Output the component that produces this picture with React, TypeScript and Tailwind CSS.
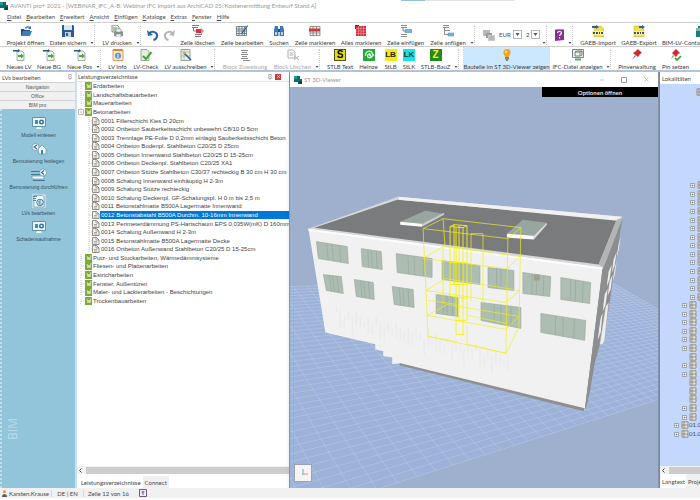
import { Minus, Pin, X } from "lucide-react";
import type { ReactNode } from "react";

type IconType = () => ReactNode;

type ToolItem = {
  label: string;
  icon: IconType;
  width: string;
  disabled?: boolean;
  active?: boolean;
};

const svgProps = { viewBox: "0 0 12 12", className: "size-3 shrink-0", "aria-hidden": true };

function OpenProjectIcon() {
  return (
    <svg {...svgProps}>
      <path d="M1 4h3l1 1h5v6H1z" fill="#1f4e86" />
      <path d="M3 6h9l-2 5H1z" fill="#3f7cc0" />
      <path d="M5 3c1-2 4-2 5-1l1-1v3H8l1-1c-1-1-2 0-3 1z" fill="#3d6fae" />
    </svg>
  );
}

function SaveIcon() {
  return (
    <svg {...svgProps}>
      <path d="M0 0h11l1 1v11H0z" fill="#2b5b94" />
      <path d="M2 0h8v5H2z" fill="#dbe7f4" />
      <path d="M3 7h6v5H3z" fill="#c3d3e6" />
      <path d="M4 8h2v3H4z" fill="#2b5b94" />
    </svg>
  );
}

function PrintIcon() {
  return (
    <svg {...svgProps}>
      <path d="M1 0h5l2 2v5H1z" fill="#eef4ea" stroke="#5d7f5a" strokeWidth=".8" />
      <path d="M2 3h4M2 5h3" stroke="#6a9a5c" />
      <path d="M4 6h7l1 1v4H3V7z" fill="#8c9599" />
      <path d="M5 4h5v3H5zM5 9h5v3H5z" fill="#f7f9f9" stroke="#6d777c" strokeWidth=".5" />
      <circle cx="10" cy="8" r=".9" fill="#5cb531" />
    </svg>
  );
}

function UndoIcon() {
  return (
    <svg {...svgProps}>
      <path d="M2 4.500c3-3.500 9-1 8 3-.3 1.500-1.500 3-3.500 3.500" fill="none" stroke="#2f62a8" strokeWidth="2" />
      <path d="M0 1l1 6 5-1z" fill="#2f62a8" />
    </svg>
  );
}

function RedoIcon() {
  return (
    <svg {...svgProps}>
      <path d="M10 4.500c-3-3.500-9-1-8 3 .3 1.500 1.500 3 3.500 3.500" fill="none" stroke="#b4b7ba" strokeWidth="2" />
      <path d="M12 1l-1 6-5-1z" fill="#b4b7ba" />
    </svg>
  );
}

function DeleteRowIcon() {
  return (
    <svg {...svgProps}>
      <path d="M0 .5h7M0 2.500h6M3 9.500h7M3 11.500h6" stroke="#7d7d7d" />
      <path d="M1.500 3v3H4" stroke="#7d7d7d" fill="none" />
      <path d="M4 4h5v4H4z" fill="#d6323b" />
      <path d="M9 3l3 3-3 3z" fill="#e58288" />
    </svg>
  );
}

function EditRowIcon() {
  return (
    <svg {...svgProps}>
      <path d="M.5 1.500h10v9H.5zM.5 4h10M.5 6h10M.5 8.500h10M3 1.500v9M6 1.500v9M8.500 1.500v9" fill="#f4f4f4" stroke="#5e6a70" strokeWidth=".8" />
      <path d="M11.500 0L6 7l-1 2 2-1 5-7z" fill="#35639c" />
    </svg>
  );
}

function SearchIcon() {
  return (
    <svg {...svgProps}>
      <path d="M2 1h3l.5 10H1V5zM7 1h3l1 4v6H6.500z" fill="#3f77b5" />
      <path d="M5 4h2v3H5z" fill="#21508b" />
      <path d="M2 7h2v3H2zM8 7h2v3H8z" fill="#b8d1eb" />
    </svg>
  );
}

function MarkRowIcon() {
  return (
    <svg {...svgProps}>
      <path d="M1 1.500h10v9H1zM1 8h10M4 1.500v9M7.500 1.500v9" fill="#f4f4f4" stroke="#787878" strokeWidth=".8" />
      <path d="M0 3.500h11v3H0z" fill="#cc3a37" />
    </svg>
  );
}

function MarkAllIcon() {
  return (
    <svg {...svgProps}>
      <path d="M1 1h10v10H1z" fill="#d12f3c" />
      <path d="M1 3.500h10M1 6h10M1 8.500h10M3.500 1v10M6 1v10M8.500 1v10" stroke="#ee9aa0" strokeWidth=".6" />
      <path d="M0 0h4v1H1v3H0z" fill="#8a2028" />
    </svg>
  );
}

function InsertRowIcon() {
  return (
    <svg {...svgProps}>
      <path d="M1 .5h6M1 2.500h6M1 9.500h6M1 11.500h6M3 3v3h2" fill="none" stroke="#8b8b8b" />
      <path d="M5 4.500h7v3H5z" fill="#79b2dc" stroke="#4b86b4" strokeWidth=".5" />
    </svg>
  );
}

function AppendRowIcon() {
  return (
    <svg {...svgProps}>
      <path d="M1 .5h6M1 2.500h6M3 5.500h5M2.500 3v6.500H6" fill="none" stroke="#8b8b8b" />
      <path d="M6 8h6v3H6z" fill="#79b2dc" stroke="#4b86b4" strokeWidth=".5" />
    </svg>
  );
}

function CurrencyIcon() {
  return (
    <svg {...svgProps}>
      <path d="M0 1h7v6H0z" fill="#b9b9b9" />
      <path d="M3 4h6v5H3z" fill="#9a9a9a" />
      <path d="M5 6h7v6H5z" fill="#c9c9c9" />
      <path d="M6 8h5M6 10h5" stroke="#8f8f8f" strokeWidth=".6" />
    </svg>
  );
}

function HelpIcon() {
  return (
    <svg {...svgProps}>
      <path d="M2 1l9-1v11l-9 1z" fill="#8e2f9c" />
      <path d="M2 1l1-1h8v1z" fill="#c47fd0" />
      <path d="M4.500 4c0-2 4-2 4 0 0 1.300-2 1.200-2 3M6.500 8.300v1.200" fill="none" stroke="#fff" strokeWidth="1.200" />
    </svg>
  );
}

function GaebImportIcon() {
  return (
    <svg {...svgProps}>
      <path d="M2 1h7l3 3v8H2z" fill="#f2dd52" stroke="#a99c3d" strokeWidth=".4" />
      <path d="M0 1h4V0l3 2-3 2V3H0z" fill="#2d5f9f" />
      <path d="M0 6h12v4H0z" fill="#f8efab" />
      <path d="M1 8h2M4 8h2M7 8h1M9 8h2" stroke="#3f5164" strokeWidth="2" />
    </svg>
  );
}

function GaebExportIcon() {
  return (
    <svg {...svgProps}>
      <path d="M1 1h7l3 3v8H1z" fill="#f2dd52" stroke="#a99c3d" strokeWidth=".4" />
      <path d="M6 1h3V0l3 2-3 2V3H6z" fill="#2d5f9f" />
      <path d="M0 6h12v4H0z" fill="#f8efab" />
      <path d="M1 8h2M4 8h2M7 8h1M9 8h2" stroke="#3f5164" strokeWidth="2" />
    </svg>
  );
}

function ContainerIcon() {
  return (
    <svg {...svgProps}>
      <path d="M2 1h8v11H0V6h2z" fill="#1e7d78" />
      <path d="M0 3h5v3H0z" fill="#7eb7ae" />
    </svg>
  );
}

function NewDocIcon() {
  return (
    <svg {...svgProps}>
      <path d="M4 2h5l2 2v7.500H4z" fill="#f2f6ef" stroke="#7f8c84" strokeWidth=".7" />
      <path d="M0 1h5V0l2 1.700L5 3.500v-1H0z" fill="#24568f" />
      <path d="M5 6h3V4.500l3 2.500-3 2.500V8H5z" fill="#4ba83e" />
    </svg>
  );
}

function InfoIcon() {
  return (
    <svg {...svgProps}>
      <path d="M1 .5h10v11H1z" fill="#f5e6cc" stroke="#d28b3d" strokeWidth=".8" />
      <path d="M1 0h10v2H1z" fill="#e08a36" />
      <circle cx="6" cy="6.800" r="3" fill="#5e91c8" />
      <path d="M6 5v4" stroke="#fff" />
    </svg>
  );
}

function CheckIcon() {
  return (
    <svg {...svgProps}>
      <path d="M1 .5h6l2 2v9H1z" fill="#e4efdf" stroke="#7b9c76" strokeWidth=".8" />
      <path d="M3 7l3 3 5.500-7" fill="none" stroke="#43a436" strokeWidth="2" />
    </svg>
  );
}

function TenderIcon() {
  return (
    <svg {...svgProps}>
      <path d="M1 .5h9v11H1z" fill="#ecf3df" stroke="#7d8a7b" strokeWidth=".8" />
      <path d="M1 3h9M4 .5v11M1 7h9" stroke="#8aa77e" strokeWidth=".6" />
      <path d="M4 4l7 7" stroke="#2f5ea0" strokeWidth="1.600" />
      <path d="M3 3h3v2H4z" fill="#d9a43c" />
    </svg>
  );
}

function BlockAssignIcon() {
  return (
    <svg {...svgProps}>
      <path d="M2 1.500h7M3 3.500h5M2 5.500h7M3 7.500h5M2 9.500h7M4 11.500h7" fill="none" stroke="#8d8d8d" />
    </svg>
  );
}

function BlockDeleteIcon() {
  return (
    <svg {...svgProps}>
      <path d="M1 1h5l2 2v6H1zM2.500 4h4M2.500 6h4M7 7l5 4M12 7l-5 4" fill="none" stroke="#b0b0b0" />
    </svg>
  );
}

function StlbTextIcon() {
  return <span className="flex size-3 shrink-0 items-center justify-center bg-[#e8df1b] font-['Liberation_Sans'] text-[10px] leading-none font-bold text-black outline-1 -outline-offset-1 outline-[#55530d]">S</span>;
}

function HeinzeIcon() {
  return (
    <svg {...svgProps}>
      <path d="M0 0h12v12H0z" fill="#27a83a" />
      <path d="M2.500 7c0-6 6-6 7-2l1 1-2 2-2-2h1c-1-2-3-1-3 1 0 2 3 2 4 1" fill="none" stroke="#e9ffe9" strokeWidth="1.200" />
    </svg>
  );
}

function StlbIcon() {
  return <span className="flex size-3 shrink-0 items-center justify-center bg-[#f4ea14] font-['Liberation_Sans'] text-[8px] leading-none font-bold text-[#27270f]">LB</span>;
}

function StlkIcon() {
  return <span className="flex size-3 shrink-0 items-center justify-center bg-[#19e3e8] font-['Liberation_Sans'] text-[8px] leading-none font-bold text-[#0d3e40]">LK</span>;
}

function BauzIcon() {
  return <span className="flex size-3 shrink-0 items-center justify-center bg-[#238a1c] font-['Liberation_Sans'] text-[10px] leading-none font-bold text-[#f6f02c]">Z</span>;
}

function BulbIcon() {
  return (
    <svg {...svgProps}>
      <path d="M6 0a3.600 3.600 0 0 1 3.600 3.700C9.500 6 8 6 8 8H4c0-2-1.500-2-1.600-4.300A3.600 3.600 0 0 1 6 0z" fill="#f5a21f" />
      <circle cx="5" cy="3" r="1.300" fill="#fbd57e" />
      <path d="M4 8h4v2.500H7V12H5v-1.500H4z" fill="#8a8274" />
    </svg>
  );
}

function IfcIcon() {
  return (
    <svg {...svgProps}>
      <path d="M.5.500h11v8H.5z" fill="#eef2f2" stroke="#77868a" />
      <path d="M3 3h5v4H3zM3 3l2-1h5v4L8 7M8 3l2-1" fill="none" stroke="#586d6f" strokeWidth=".8" />
      <path d="M3 10.500h6" stroke="#5bb163" strokeWidth="2" />
    </svg>
  );
}

function PinManageIcon() {
  return (
    <svg {...svgProps}>
      <path d="M7 0l4 4-2 1-2 3-5-4 3-2z" fill="#cf2a31" />
      <path d="M4 6l-3 5 4-4z" fill="#7d7d7d" />
    </svg>
  );
}

function PinSetIcon() {
  return (
    <svg {...svgProps}>
      <path d="M6 0l4 4-2 1-2 3-4-4 2-2z" fill="#cf2a31" />
      <path d="M3 6l-2 4 3-3z" fill="#7d7d7d" />
      <path d="M5 9l2 2 4-4" fill="none" stroke="#3c9b35" strokeWidth="1.700" />
    </svg>
  );
}

const MENU = ["Datei", "Bearbeiten", "Erweitert", "Ansicht", "Einfügen", "Kataloge", "Extras", "Fenster", "Hilfe"];

const PROJECT_TOOLS: ToolItem[] = [
  { label: "Projekt öffnen", icon: OpenProjectIcon, width: "w-[43px]" },
  { label: "Daten sichern", icon: SaveIcon, width: "w-[42px]" },
];

const PRINT_TOOLS: ToolItem[] = [{ label: "LV drucken", icon: PrintIcon, width: "w-[36px]" }];

const ROW_TOOLS: ToolItem[] = [
  { label: "Zeile löschen", icon: DeleteRowIcon, width: "w-[41px]" },
  { label: "Zeile bearbeiten", icon: EditRowIcon, width: "w-[48px]" },
  { label: "Suchen", icon: SearchIcon, width: "w-[26px]" },
  { label: "Zeile markieren", icon: MarkRowIcon, width: "w-[46px]" },
  { label: "Alles markieren", icon: MarkAllIcon, width: "w-[46px]" },
  { label: "Zeile einfügen", icon: InsertRowIcon, width: "w-[43px]" },
  { label: "Zeile anfügen", icon: AppendRowIcon, width: "w-[42px]" },
];

const GAEB_TOOLS: ToolItem[] = [
  { label: "GAEB-Import", icon: GaebImportIcon, width: "w-[42px]" },
  { label: "GAEB-Export", icon: GaebExportIcon, width: "w-[40px]" },
  { label: "BIM-LV-Container importieren", icon: ContainerIcon, width: "w-[86px]" },
];

const NEW_TOOLS: ToolItem[] = [
  { label: "Neues LV", icon: NewDocIcon, width: "w-[30px]" },
  { label: "Neue BG", icon: NewDocIcon, width: "w-[30px]" },
  { label: "Neue Pos", icon: NewDocIcon, width: "w-[31px]" },
];

const LV_TOOLS: ToolItem[] = [
  { label: "LV Info", icon: InfoIcon, width: "w-[25px]" },
  { label: "LV-Check", icon: CheckIcon, width: "w-[32px]" },
  { label: "LV ausschreiben", icon: TenderIcon, width: "w-[47px]" },
];

const BLOCK_TOOLS: ToolItem[] = [
  { label: "Block Zuweisung", icon: BlockAssignIcon, width: "w-[52px]", disabled: true },
  { label: "Block Löschen", icon: BlockDeleteIcon, width: "w-[43px]", disabled: true },
];

const CATALOG_TOOLS: ToolItem[] = [
  { label: "STLB Text", icon: StlbTextIcon, width: "w-[32px]" },
  { label: "Heinze", icon: HeinzeIcon, width: "w-[25px]" },
  { label: "StLB", icon: StlbIcon, width: "w-[19px]" },
  { label: "StLK", icon: StlkIcon, width: "w-[18px]" },
  { label: "STLB-BauZ", icon: BauzIcon, width: "w-[35px]" },
];

const VIEWER_TOOLS: ToolItem[] = [
  { label: "Bauteile im ST 3D-Viewer zeigen", icon: BulbIcon, width: "w-[87px]", active: true },
  { label: "IFC-Datei anzeigen", icon: IfcIcon, width: "w-[55px]" },
];

const PIN_TOOLS: ToolItem[] = [
  { label: "Pinverwaltung", icon: PinManageIcon, width: "w-[44px]" },
  { label: "Pin setzen", icon: PinSetIcon, width: "w-[33px]" },
];

const POSITIONS = [
  "Fillerschicht Kies D 20cm",
  "Ortbeton Sauberkeitsschicht unbewehrt C8/10 D 5cm",
  "Trennlage PE-Folie D 0,2mm einlagig Sauberkeitsschicht Beton",
  "Ortbeton Bodenpl. Stahlbeton C20/25 D 25cm",
  "Ortbeton Innenwand Stahlbeton C20/25 D 15-25cm",
  "Ortbeton Deckenpl. Stahlbeton C20/25 XA1",
  "Ortbeton Stütze Stahlbeton C30/37 rechteckig B 30 cm H 30 cm",
  "Schalung Innenwand einhäuptig H 2-3m",
  "Schalung Stütze rechteckig",
  "Schalung Deckenpl. GF-Schalungspl. H 0 m bis 2,5 m",
  "Betonstahlmatte B500A Lagermatte Innenwand",
  "Betonstabstahl B500A Durchm. 10-16mm Innenwand",
  "Perimeterdämmung PS-Hartschaum EPS 0,035W(mK) D 160mm",
  "Schalung Außenwand H 2-3m",
  "Betonstahlmatte B500A Lagermatte Decke",
  "Ortbeton Außenwand Stahlbeton C20/25 D 15-25cm",
];

const GROUPS_BEFORE = ["Erdarbeiten", "Landschaftsbauarbeiten", "Mauerarbeiten", "Betonarbeiten"];
const GROUPS_AFTER = [
  "Putz- und Stuckarbeiten, Wärmedämmsysteme",
  "Fliesen- und Plattenarbeiten",
  "Estricharbeiten",
  "Fenster, Außentüren",
  "Maler- und Lackierarbeiten - Beschichtungen",
  "Trockenbauarbeiten",
];

const SELECTED = 11;

function ToolGroup({ items, menu }: { items: ToolItem[]; menu?: boolean }) {
  return (
    <>
      {items.map(({ label, icon: Icon, width, disabled, active }) => (
        <button
          key={label}
          disabled={disabled}
          className={`flex h-full shrink-0 flex-col items-center gap-0.5 pt-0.5 whitespace-nowrap ${width} ${
            active ? "bg-[#cce8ff]" : ""
          } ${disabled ? "text-[#a9a9a9]" : "text-[#3c3c3c]"}`}
        >
          <Icon />
          <span className="leading-[7px]">{label}</span>
        </button>
      ))}
      {menu && <Overflow />}
    </>
  );
}

function Overflow() {
  return (
    <button aria-label="Weitere Optionen" className="flex h-full w-1.5 shrink-0 items-end justify-center pb-0.5">
      <svg viewBox="0 0 4 2" className="h-0.5 w-1">
        <path d="M.5 0h3L2 2z" fill="#555" />
      </svg>
    </button>
  );
}

function Separator() {
  return <div className="mr-1 -ml-px h-5 shrink-0 self-center border-l border-dotted border-[#c9c9c9]" />;
}

function DropDown({ label, value, width }: { label: string; value: string; width: string }) {
  return (
    <label className={`grid shrink-0 items-center ${width}`}>
      <select aria-label={label} defaultValue={value} className="col-start-1 row-start-1 w-full appearance-none leading-[9px] outline-none">
        <option>{value}</option>
      </select>
      <span className="pointer-events-none col-start-1 row-start-1 flex size-[9px] items-center justify-center justify-self-end border border-[#b5b5b5] bg-white">
        <svg viewBox="0 0 5 3" className="h-[3px] w-[5px]">
          <path d="M.5 0h4l-2 3z" fill="#555" />
        </svg>
      </span>
    </label>
  );
}

function AppLogo() {
  return (
    <svg viewBox="0 0 8 8" className="size-2 shrink-0">
      <path d="M0 0h6v3h2v5H4V6H0z" fill="#0f6b68" />
      <path d="M0 0h3v3H0z" fill="#1d9a8f" />
      <path d="M5 5h3v3H5z" fill="#153f41" />
    </svg>
  );
}

const SIDE_ITEMS = [
  { label: "Modell einlesen", kind: "screen" },
  { label: "Bemusterung festlegen", kind: "house" },
  { label: "Bemusterung durchführen", kind: "lines" },
  { label: "LVs bearbeiten", kind: "document" },
  { label: "Schadensaufnahme", kind: "screen" },
];

function SideIcon({ kind }: { kind: string }) {
  return (
    <svg viewBox="0 0 16 16" className="size-4">
      {kind === "screen" && (
        <>
          <path d="M1.500 2.500h13v9h-13z" fill="#e9f6fb" stroke="#5f91a8" />
          <path d="M6 12h4l1 2H5z" fill="#e9f6fb" />
          <path d="M4 5h3v4H4z" fill="#4c8cb4" />
          <circle cx="10.500" cy="7" r="2.500" fill="#2f6e9c" />
          <circle cx="10.500" cy="7" r="1" fill="#fff" />
        </>
      )}
      {kind === "house" && (
        <>
          <path d="M7 8l4-4 4 4v5H8z" fill="#f2fafd" stroke="#5585a0" strokeWidth=".6" />
          <path d="M10 9h2v4h-2z" fill="#4580a5" />
          <circle cx="4.500" cy="6" r="3.500" fill="#f2fafd" stroke="#5585a0" strokeWidth=".6" />
          <path d="M6 4L3 6l3 2" fill="none" stroke="#2f6e9c" strokeWidth="1.200" />
        </>
      )}
      {kind === "lines" && (
        <>
          <path d="M0 4.500h9M0 7.500h11M2 13.500h12" stroke="#3f7798" strokeWidth="1" />
          <path d="M1 9h12v3H1z" fill="#f2fafd" stroke="#4f7f9a" strokeWidth=".6" />
          <circle cx="12" cy="5.500" r="3.500" fill="#f2fafd" stroke="#4f7f9a" strokeWidth=".6" />
          <path d="M13 3.500l-2.500 2 2.500 2" fill="none" stroke="#2f6e9c" strokeWidth="1.200" />
        </>
      )}
      {kind === "document" && (
        <>
          <path d="M0 0h16v16H0z" fill="#b9dbe8" stroke="#83a9ba" />
          <path d="M3 2.500h8l2 2V14H3z" fill="#f4fbfd" stroke="#5c8ba2" strokeWidth=".6" />
          <path d="M2 3.500h4M2 5.500h3M2 7.500h3" stroke="#4e86a5" />
          <circle cx="9" cy="9.500" r="3.300" fill="#d3e9f1" stroke="#3e7d9e" />
          <path d="M8 8v3h3M9 7v3" fill="none" stroke="#3e7d9e" strokeWidth=".8" />
        </>
      )}
    </svg>
  );
}

function SidePanel() {
  return (
    <aside className="flex w-[77px] shrink-0 flex-col border-r-2 border-[#c6e3f5] bg-[#92c4da]">
      <header className="flex h-2.5 items-center justify-between bg-white px-0.5">
        <h2>LVs bearbeiten</h2>
        <Pin size={6} className="text-[#777]" />
      </header>
      <nav className="flex flex-col font-['Liberation_Sans',sans-serif] text-[5px] text-[#555]">
        {["Navigation", "Office", "BIM pro"].map((name) => (
          <button key={name} className="h-[9px] border-t border-[#d0d0d0] bg-[#f1f1f1] leading-[8px]">
            {name}
          </button>
        ))}
      </nav>
      <div className="flex flex-1 flex-col justify-between border-l-2 border-dotted border-[#bfdfeb] pt-1.5 pb-12">
        <div className="flex flex-col gap-0.5">
          {SIDE_ITEMS.map((item) => (
            <button key={item.label} className="flex flex-col items-center font-['Liberation_Sans',sans-serif] text-[5px] leading-[8px] whitespace-nowrap text-[#31505e]">
              <SideIcon kind={item.kind} />
              {item.label}
            </button>
          ))}
        </div>
        <span className="ml-1 rotate-180 self-start font-['Open_Sans',sans-serif] text-[12px] leading-[14px] text-[#bcdde9] [writing-mode:vertical-rl]">BIM</span>
      </div>
    </aside>
  );
}

function GroupRow({ name, open }: { name: string; open?: boolean }) {
  return (
    <li className="flex items-center">
      <svg viewBox="0 0 14 8" className="h-2 w-3.5 shrink-0">
        <path d="M3 0v8M3 4h4" stroke="#c8c8c8" strokeDasharray="1 1" />
        {open && <path d="M.5 1.500h5v5h-5zM2 4h2" fill="#fff" stroke="#9a9a9a" strokeWidth=".7" />}
        <path d="M7 0h7v8H7z" fill="#7fa935" />
        <path d="M9 2l1 4 1-3 1 3 1-5" fill="none" stroke="#e6f1cf" strokeWidth=".8" />
      </svg>
      <span className="pl-px">{name}</span>
    </li>
  );
}

function PositionRow({ index, name }: { index: number; name: string }) {
  const selected = index === SELECTED;
  return (
    <li className="flex items-center pl-2.5">
      <svg viewBox="0 0 12 8" className="h-2 w-3 shrink-0">
        <path d="M1 0v8M1 4h3" stroke="#c8c8c8" strokeDasharray="1 1" />
        <path d="M4.500.500h4L11 3v4.500H4.500z" fill="#f3f1ee" stroke="#77716b" strokeWidth=".8" />
        <path d="M8 .5V3h3M6 4.500h3M6 6h3" fill="none" stroke="#77716b" strokeWidth=".6" />
      </svg>
      <span className={`mr-px flex h-full flex-1 items-center gap-0.5 pl-px ${selected ? "bg-[#0078d7] text-white" : ""}`}>
        <span>{String(index + 1).padStart(4, "0")}</span>
        <span>{name}</span>
      </span>
    </li>
  );
}

function HScroll() {
  return (
    <div className="flex h-2 shrink-0 items-center gap-1 bg-[#f2f2f2] pl-0.5">
      <svg viewBox="0 0 3 5" className="h-[5px] w-[3px]">
        <path d="M2.500.500l-2 2 2 2" fill="none" stroke="#444" />
      </svg>
      <div className="h-[7px] flex-1 bg-[#cdcdcd]" />
    </div>
  );
}

function ListPanel() {
  return (
    <section className="flex w-[212px] shrink-0 flex-col overflow-hidden bg-white">
      <header className="flex h-2.5 shrink-0 items-center justify-between border-b border-[#e5e5e5] pr-2 pl-px">
        <h2>Leistungsverzeichnisse</h2>
        <span className="flex items-center gap-0.5">
          <Pin size={6} className="text-[#666]" />
          <button aria-label="Schließen" className="flex size-1.5 items-center justify-center bg-[#d63636] text-white">
            <X size={5} strokeWidth={3} />
          </button>
        </span>
      </header>
      <ul className="grid h-[223px] shrink-0 grid-rows-[repeat(26,minmax(0,1fr))] pl-px font-['Liberation_Sans',sans-serif] text-[6px] leading-[8px] whitespace-nowrap text-[#3f3f3f]">
        {GROUPS_BEFORE.map((name) => (
          <GroupRow key={name} name={name} open={name === "Betonarbeiten"} />
        ))}
        {POSITIONS.map((name, i) => (
          <PositionRow key={name} index={i} name={name} />
        ))}
        {GROUPS_AFTER.map((name) => (
          <GroupRow key={name} name={name} />
        ))}
      </ul>
      <div className="flex-1" />
      <HScroll />
      <div className="flex h-3.5 shrink-0 items-stretch pt-0.5 pl-0.5">
        <button className="px-0.5 text-[#444]">Leistungsverzeichnisse</button>
        <button className="bg-[#f0f0f0] px-0.5">Connect</button>
      </div>
    </section>
  );
}

type Pt = [number, number];

// Ground plane corners: far left, far right, near right, near left
const GROUND: Pt[] = [[180, 290], [600, 275], [760, 367], [280, 520]];

// Projective map of the unit square onto the ground plane
function project(u: number, v: number): Pt {
  const [a, b, c, d] = GROUND;
  const dx1 = b[0] - c[0];
  const dx2 = d[0] - c[0];
  const sx = a[0] - b[0] + c[0] - d[0];
  const dy1 = b[1] - c[1];
  const dy2 = d[1] - c[1];
  const sy = a[1] - b[1] + c[1] - d[1];
  const det = dx1 * dy2 - dx2 * dy1;
  const g = (sx * dy2 - dx2 * sy) / det;
  const h = (dx1 * sy - sx * dy1) / det;
  const w = g * u + h * v + 1;
  return [
    ((b[0] - a[0] + g * b[0]) * u + (d[0] - a[0] + h * d[0]) * v + a[0]) / w,
    ((b[1] - a[1] + g * b[1]) * u + (d[1] - a[1] + h * d[1]) * v + a[1]) / w,
  ];
}

const GRID_COUNT = 42;
const GRID_PATH = Array.from({ length: GRID_COUNT + 1 }, (_, i) => {
  const t = i / GRID_COUNT;
  return `M${project(t, 0)}L${project(t, 1)}M${project(0, t)}L${project(1, t)}`;
}).join("");

const WINDOWS: Pt[][] = [
  [[316, 241], [347, 246], [348, 263], [318, 258]],
  [[361, 248], [381, 251], [382, 269], [362, 266]],
  [[396, 253], [432, 258], [432, 277], [397, 272]],
  [[442, 260], [480, 265], [480, 284], [442, 279]],
  [[488, 267], [514, 270], [514, 290], [488, 287]],
  [[523, 272], [551, 276], [550, 296], [523, 293]],
  [[561, 277], [591, 282], [590, 303], [561, 299]],
  [[323, 274], [341, 276], [343, 293], [326, 290]],
  [[354, 279], [373, 282], [374, 299], [356, 296]],
  [[392, 286], [413, 289], [414, 307], [394, 304]],
  [[436, 294], [458, 297], [458, 316], [436, 313]],
  [[481, 302], [521, 307], [521, 328], [481, 320]],
  [[541, 313], [586, 320], [585, 340], [541, 332]],
];

function mullions(w: Pt[]) {
  return [0.33, 0.5, 0.75]
    .map((t) => {
      const x1 = w[0][0] + (w[1][0] - w[0][0]) * t;
      const y1 = w[0][1] + (w[1][1] - w[0][1]) * t;
      const x2 = w[3][0] + (w[2][0] - w[3][0]) * t;
      const y2 = w[3][1] + (w[2][1] - w[3][1]) * t;
      return `M${x1} ${y1}L${x2} ${y2}`;
    })
    .join("");
}

// Faint joints along the plinth
const PLINTH = Array.from({ length: 44 }, (_, i) => {
  const x = 336 + i * 4;
  const y = 306 + i * 1.1 + ((i * 7) % 5) * 2;
  return `M${x} ${y}v${6 + ((i * 5) % 7) * 2}`;
}).join("");

function Building() {
  return (
    <svg viewBox="289 86 370 402" preserveAspectRatio="xMidYMid slice" className="h-full w-full" role="img" aria-label="Gebäudemodell">
      <polygon points={GROUND.join(" ")} fill="#9db2d8" />
      <path d={GRID_PATH} fill="none" stroke="#c6d5f0" strokeWidth=".6" opacity=".6" />
      <path d="M603 267L623 216L616 262L609 308L604 340L600 345L595 363L590 392L585 410L583 350z" fill="#8b8d8f" />
      <path d="M609 271l3-7-2 15-3 7zM614 259l3-8-2 14-3 8zM619 244l2-8-2 14-2 7zM605 294l3-6-2 16-3 7zM610 281l3-7-2 15-3 6zM615 268l2-7-2 14-2 6zM600 320l3-8-2 20-3 8z" fill="#eceeee" />
      <path d="M606 306l3-4-4 38q-2 6-5 4z" fill="#eeeeee" stroke="#a5a5a5" strokeWidth=".5" />
      <path d="M308 228L398 196L623 216L603 267z" fill="#d7d8d9" />
      <path d="M314 227L397 199L617 219L599 264z" fill="#7a7b7c" />
      <path d="M398 196L622 216L618 220L399 199z" fill="#f1f1f1" />
      <path d="M617 219L623 217L604 267L599 264z" fill="#b3b4b5" />
      <path d="M400 221L425 210L444 213L422 223z" fill="#98a69f" />
      <path d="M400 221L422 223V226L400 224z" fill="#fbfbfb" />
      <path d="M422 223L444 212V214L422 226z" fill="#c7cbc9" />
      <path d="M507 233L523 219L547 222L534 235z" fill="#98a69f" />
      <path d="M507 233L534 235V239L507 237z" fill="#fbfbfb" />
      <path d="M534 235L547 222V224L534 239z" fill="#dcdedd" />
      <path d="M308 228L603 267L585 410L400 363L392 364V357L383 356V351L375 349V344L325 332z" fill="#f1f1f2" />
      <path d="M308 228L603 267V269L308 230z" fill="#fdfdfd" />
      <path d="M400 363L585 408L584 411L399 365z" fill="#8f8f90" />
      <path d="M603 267L585 410L588 402L606 285z" fill="#8c8e90" />
      <path d={PLINTH} stroke="#e3e3e4" strokeWidth=".6" />
      {WINDOWS.map((w, i) => (
        <g key={i}>
          <polygon points={w.join(" ")} fill="#adbdb1" stroke="#98a69c" strokeWidth=".6" />
          <path d={mullions(w)} stroke="#95a59a" strokeWidth=".6" />
        </g>
      ))}
      <path d="M534 274h6v6h-6z" fill="#a0a08f" />
      <g fill="none" stroke="#f0ef1d" strokeWidth=".7">
        <path d="M423 228L443 218L521 227L508 238zM423 228L428 336L506 353L519 327L521 227M443 218L445 246M508 238L506 353" />
        <path d="M423 258L443 246L520 256L507 268zM426 290L445 278L520 290L506 302zM427 315L447 304L519 316L506 329z" />
        <path d="M443 246V304M471 233h12v70M471 233v68M429 300l28 4M468 315l38 8" />
        <path d="M428 336l27 5M467 325v18M506 353l-38-9" strokeWidth=".6" />
      </g>
      <g fill="none" stroke="#f4f314" strokeWidth=".9">
        <path d="M450 226l4-2 13 1-4 2zM450 226v70M454 224v60M459 225v95M463 227v108M467 225v95M456 227v107" />
        <path d="M450 262h17M450 284h17M452 296l15 2M455 320h11M456 334h8" />
      </g>
    </svg>
  );
}

function Viewer() {
  return (
    <section className="flex min-w-0 flex-1 flex-col border-r border-l border-[#8793a8] bg-[#9fb0cf] shadow-md">
      <header className="flex h-[15px] shrink-0 items-center bg-white pr-2 pl-1 text-[#9a9a9a]">
        <AppLogo />
        <h2 className="flex-1 pl-0.5">ST 3D-Viewer</h2>
        <div className="flex items-center gap-4">
          <button aria-label="Minimieren">
            <Minus size={6} />
          </button>
          <button aria-label="Maximieren">
            <svg viewBox="0 0 6 6" className="size-1.5">
              <path d="M.5.500h5v5h-5z" fill="none" stroke="#9a9a9a" />
            </svg>
          </button>
          <button aria-label="Schließen">
            <X size={7} />
          </button>
        </div>
      </header>
      <div className="relative min-h-0 flex-1">
        <Building />
        <button className="absolute top-0 right-0 h-[10px] w-[116px] bg-black text-center leading-[9px] font-bold text-[#e6e6e6]">Optionen öffnen</button>
        <div className="absolute bottom-1.5 left-1 size-[18px] border border-[#9ca3ad] bg-[#f5f5f5]">
          <svg viewBox="0 0 16 16" className="size-4">
            <path d="M8 4v5" stroke="#6fa3ea" />
            <path d="M8 9h5" stroke="#e98d83" />
            <path d="M8 9l-1 1" stroke="#76c47b" />
          </svg>
        </div>
      </div>
    </section>
  );
}

const LEAFS = [20, 23, 24, 25];

const LOCATIONS = Array.from({ length: 30 }, (_, i) => {
  if (i < 14) return { indent: "pl-[30px]", leaf: false, label: "" };
  if (i < 28) return { indent: "pl-[22px]", leaf: LEAFS.includes(i), label: "" };
  return { indent: "pl-[14px]", leaf: false, label: "01.0" };
});

function LocationIcon() {
  return <path d="M8 .8h6v6.400H8zM8 4h6M10 .8v6.400" fill="#e4e0d6" stroke="#7b7568" strokeWidth=".7" />;
}

function LocationPanel() {
  return (
    <aside className="flex w-[41px] shrink-0 flex-col overflow-hidden border-l border-[#7d8797] bg-[#c3d8fc]">
      <header className="flex h-3 shrink-0 items-center bg-white pl-0.5">
        <h2>Lokalitäten</h2>
      </header>
      <svg viewBox="7 0 4 8" className="mt-1 h-2 w-1 shrink-0 self-end">
        <LocationIcon />
      </svg>
      <ul className="mt-auto mb-7 grid h-[257px] shrink-0 grid-rows-[repeat(30,minmax(0,1fr))] whitespace-nowrap">
        {LOCATIONS.map((item, i) => (
          <li key={i} className={`flex items-center leading-[8px] text-[#3a4a66] ${item.indent}`}>
            <svg viewBox="0 0 15 8" className="h-2 w-[15px] shrink-0">
              {!item.leaf && <path d="M.5 2.500h4v4h-4z" fill="#fff" stroke="#7f868f" strokeWidth=".7" />}
              {!item.leaf && <path d="M1.500 4.500h2M2.500 3.500v2" stroke="#555" strokeWidth=".6" />}
              <LocationIcon />
            </svg>
            {item.label && <span>{item.label}</span>}
          </li>
        ))}
      </ul>
      <HScroll />
      <div className="flex h-3.5 shrink-0 items-stretch gap-0.5 bg-[#f0f0f0] pl-px whitespace-nowrap">
        <button className="bg-white px-px">Langtext</button>
        <button>Proje</button>
      </div>
    </aside>
  );
}

export default function App() {
  return (
    <div className="flex h-screen min-h-[480px] flex-col overflow-hidden bg-white pb-0.5 font-['Lato',sans-serif] text-[6px] leading-[7px] text-[#4a4a4a]">
      <div className="flex h-[11px] shrink-0 items-center gap-0.5">
        <AppLogo />
        <h1 className="w-[389px] shrink-0 whitespace-nowrap text-[#999]">
          AVANTI pro+ 2021 - [WEBINAR_IFC_A-B: Webinar IFC Import aus ArchiCAD 25: Kostenermittlung Entwurf Stand A]
        </h1>
        <span className="flex h-px w-[114px] self-start bg-[#e3e3e3]">
          <span className="w-6 bg-[#93c5cb]" />
        </span>
      </div>
      <nav className="flex h-[11px] shrink-0 items-center gap-[5px] pl-[7px]">
        {MENU.map((name) => (
          <button key={name}>
            <span className="underline">{name[0]}</span>
            {name.slice(1)}
          </button>
        ))}
      </nav>

      <div className="flex h-6 shrink-0 items-center overflow-hidden border-t border-[#cfcfcf] pl-1">
        <ToolGroup items={PROJECT_TOOLS} menu />
        <Separator />
        <ToolGroup items={PRINT_TOOLS} menu />
        <Separator />
        <button aria-label="Rückgängig" className="flex w-4 shrink-0 justify-center">
          <UndoIcon />
        </button>
        <button aria-label="Wiederholen" className="flex w-4 shrink-0 justify-center">
          <RedoIcon />
        </button>
        <ToolGroup items={ROW_TOOLS} menu />
        <Separator />
        <div className="flex shrink-0 items-center gap-1 pr-px pl-1">
          <CurrencyIcon />
          <DropDown label="Währung" value="EUR" width="w-[23px]" />
          <DropDown label="Nachkommastellen" value="2" width="w-[14px]" />
        </div>
        <Overflow />
        <Separator />
        <button aria-label="Hilfe" className="flex w-4 shrink-0 justify-center">
          <HelpIcon />
        </button>
        <Overflow />
        <Separator />
        <ToolGroup items={GAEB_TOOLS} />
      </div>

      <div className="flex h-6 shrink-0 items-center overflow-hidden border-t border-[#cfcfcf] pl-1">
        <ToolGroup items={NEW_TOOLS} menu />
        <Separator />
        <ToolGroup items={LV_TOOLS} menu />
        <Separator />
        <ToolGroup items={BLOCK_TOOLS} menu />
        <Separator />
        <ToolGroup items={CATALOG_TOOLS} menu />
        <Separator />
        <ToolGroup items={VIEWER_TOOLS} menu />
        <Separator />
        <ToolGroup items={PIN_TOOLS} />
      </div>

      <main className="flex min-h-0 flex-1 border-t-2 border-[#b3c3d9]">
        <SidePanel />
        <ListPanel />
        <Viewer />
        <LocationPanel />
      </main>

      <footer className="flex h-2.5 shrink-0 items-center bg-[#f1f1f1] pl-0.5">
        <svg viewBox="0 0 5 7" className="h-[7px] w-[5px]">
          <circle cx="2.500" cy="1.800" r="1.500" fill="#d99a4a" />
          <path d="M0 7c0-4 5-4 5 0z" fill="#5a5f66" />
        </svg>
        <span className="w-[44px] pl-0.5">Karsten.Krause</span>
        <span className="w-8 border-l border-[#d5d5d5] text-center">DE | EN</span>
        <span className="w-[50px] border-l border-[#d5d5d5] text-center">Zeile 12 von 16</span>
        <svg viewBox="0 0 8 8" className="ml-1.5 size-2">
          <path d="M.5.500h7v7h-7z" fill="#f4eef8" stroke="#77548f" />
          <path d="M4 2v4M2.500 3h3" stroke="#77548f" />
        </svg>
      </footer>
    </div>
  );
}
